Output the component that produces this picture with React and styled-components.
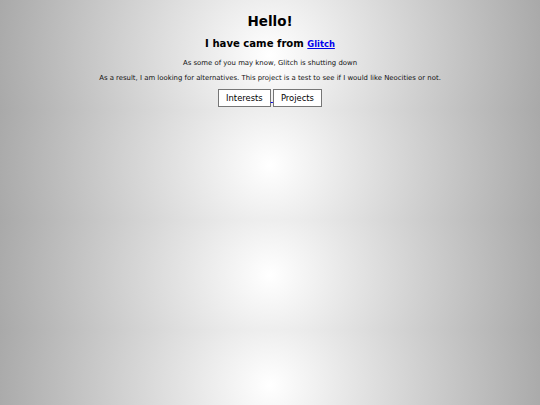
import styled, { createGlobalStyle } from 'styled-components';

const Reset = createGlobalStyle`
  html {
    background: radial-gradient(circle, #ffffff, #a9a9a9);
    background-size: 100% 110px;
  }
  body {
    margin: 3.4px;
    font-family: "DejaVu Sans", Verdana, sans-serif;
    color: #000;
  }
`;

const StyledPage = styled.main`
  text-align: center;
`;

const StyledTitle = styled.h1`
  font-size: 13.5px;
  line-height: 16px;
  margin: 9.4px 0 9.7px;
`;

const StyledSubtitle = styled.h2`
  font-size: 10.1px;
  line-height: 12px;
  margin: 9.7px 0 8.7px;
`;

const StyledLink = styled.a`
  color: #0000ee;
  font-size: 8.4px;
`;

const StyledText = styled.p`
  font-size: 6.9px;
  line-height: 8px;
  margin: 6.75px 0;
  color: #111;
`;

const StyledNav = styled.div`
  font-size: 6.75px;
`;

const StyledNavLink = styled.a`
  color: #0000ee;
`;

const StyledButton = styled.button`
  font-family: inherit;
  font-size: 8.4px;
  background: #fff;
  color: #000;
  border: 1px solid #767676;
  border-radius: 0;
  padding: 3.4px 7px;
  cursor: pointer;
`;

const App = () => {
  return (
    <>
      <Reset />
      <StyledPage>
        <StyledTitle>Hello!</StyledTitle>
        <StyledSubtitle>
          I have came from <StyledLink href="https://glitch.com">Glitch</StyledLink>
        </StyledSubtitle>
        <StyledText>As some of you may know, Glitch is shutting down</StyledText>
        <StyledText>
          As a result, I am looking for alternatives. This project is a test to see if I would like
          Neocities or not.
        </StyledText>
        <StyledNav>
          <StyledNavLink href="#interests">
            <StyledButton>Interests</StyledButton>{' '}
          </StyledNavLink>
          <StyledNavLink href="#projects">
            <StyledButton>Projects</StyledButton>
          </StyledNavLink>
        </StyledNav>
      </StyledPage>
    </>
  );
};

export default App;
